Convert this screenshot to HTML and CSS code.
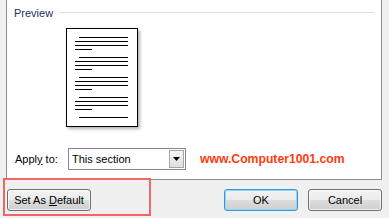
FILE: index.html
```html
<!DOCTYPE html>
<html>
<head>
<meta charset="utf-8">
<link rel="stylesheet" href="styles.css">
</head>
<body>
<div class="dialog">
  <div class="panel">
    <div class="group-head">
      <span class="group-title">Preview</span>
      <span class="group-rule"></span>
    </div>
    <div class="page">
      <div class="para">
        <div class="ln indent"></div>
        <div class="ln full"></div>
        <div class="ln full"></div>
        <div class="ln short"></div>
      </div>
      <div class="para">
        <div class="ln indent"></div>
        <div class="ln full"></div>
        <div class="ln full"></div>
        <div class="ln short"></div>
      </div>
      <div class="para">
        <div class="ln indent"></div>
        <div class="ln full"></div>
        <div class="ln full"></div>
        <div class="ln short"></div>
      </div>
      <div class="para">
        <div class="ln indent"></div>
        <div class="ln full"></div>
        <div class="ln full"></div>
        <div class="ln short"></div>
      </div>
      <div class="para">
        <div class="ln indent"></div>
      </div>
    </div>
    <div class="apply-row">
      <span class="apply-label">Appl<u>y</u> to:</span>
      <div class="select">
        <span class="select-text">This section</span>
        <span class="select-btn"><svg width="7" height="4" viewBox="0 0 7 4"><polygon points="0,0 7,0 3.5,4" fill="#000"/></svg></span>
      </div>
      <span class="site">www.Computer1001.com</span>
    </div>
  </div>
  <div class="buttons">
    <button class="btn btn-default">Set As <u>D</u>efault</button>
    <div class="spacer"></div>
    <button class="btn btn-ok">OK</button>
    <button class="btn btn-cancel">Cancel</button>
  </div>
  <div class="highlight"></div>
</div>
</body>
</html>
```

FILE: styles.css
```css
html, body {
  margin: 0;
  padding: 0;
}
body {
  background: #f0f0f0;
  font-family: "Liberation Sans", Arial, sans-serif;
  font-size: 11px;
  color: #000;
}
.dialog {
  position: relative;
  width: 389px;
  height: 218px;
  overflow: hidden;
}
.panel {
  margin-left: 6px;
  width: 376px;
  height: 180px;
  box-sizing: border-box;
  background: #fff;
  border: 1px solid #8c8d8e;
  border-top: none;
  padding: 7px 7px 0 7px;
}
.group-head {
  display: flex;
  align-items: flex-start;
  height: 13px;
  line-height: 13px;
}
.group-title {
  color: #1e3060;
}
.group-rule {
  flex: 1;
  height: 1px;
  background: #d5dfe5;
  margin-left: 6px;
  margin-top: 5px;
}
.page {
  margin-top: 8px;
  margin-left: 52px;
  width: 72px;
  height: 99px;
  box-sizing: border-box;
  border: 1px solid #000;
  background: #fff;
  box-shadow: 2px 2px 3px rgba(0,0,0,0.3);
  padding: 8px 0 0 8px;
  display: flex;
  flex-direction: column;
  gap: 7px;
}
.para {
  display: flex;
  flex-direction: column;
  gap: 3px;
}
.ln {
  height: 1px;
  background: #000;
}
.ln.full { width: 53px; }
.ln.indent { width: 49px; margin-left: 4px; }
.ln.short { width: 17px; }
.apply-row {
  display: flex;
  align-items: center;
  margin-top: 21px;
  height: 22px;
}
.apply-label {
  width: 54px;
  padding-left: 1px;
  box-sizing: border-box;
}
.apply-label u, .btn u {
  text-decoration-thickness: 1px;
  text-underline-offset: 1px;
}
.select {
  width: 118px;
  height: 22px;
  box-sizing: border-box;
  border: 1px solid #828790;
  display: flex;
  align-items: center;
  padding: 1px 1px 1px 3px;
  background: #fff;
}
.select-text {
  flex: 1;
}
.select-btn {
  width: 15px;
  height: 18px;
  box-sizing: border-box;
  border: 1px solid #a5a5a5;
  background: linear-gradient(#f6f6f6, #dedede);
  display: flex;
  align-items: center;
  justify-content: center;
}
.site {
  margin-left: 14px;
  font-weight: bold;
  font-size: 12.2px;
  color: #ff3a10;
}
.buttons {
  display: flex;
  align-items: center;
  padding: 9px 7px 0 7px;
}
.spacer { flex: 1; }
.btn {
  height: 22px;
  box-sizing: border-box;
  border: 1px solid #707070;
  border-radius: 3px;
  background: linear-gradient(#f2f2f2 0%, #ebebeb 50%, #dddddd 50%, #cfcfcf 100%);
  box-shadow: inset 0 0 0 1px rgba(255,255,255,0.7);
  font-family: "Liberation Sans", Arial, sans-serif;
  font-size: 11px;
  color: #000;
  padding: 0;
  margin: 0;
}
.btn-default { width: 84px; }
.btn-ok {
  width: 74px;
  margin-right: 10px;
  border-color: #3399dd;
  box-shadow: inset 0 0 0 1px #8fd6f7;
}
.btn-cancel { width: 74px; }
.highlight {
  position: absolute;
  left: 3px;
  top: 178px;
  width: 148px;
  height: 38px;
  box-sizing: border-box;
  border: 2px solid #f26666;
  pointer-events: none;
}
```
